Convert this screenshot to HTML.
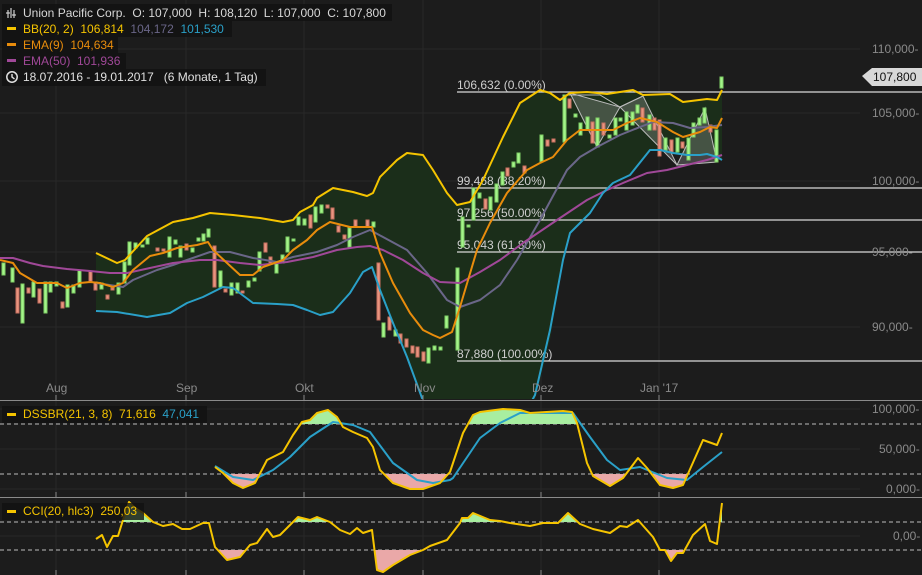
<!DOCTYPE html><html><head><meta charset="utf-8"><style>
html,body{margin:0;padding:0;background:#1c1c1c;width:922px;height:575px;overflow:hidden}
svg{display:block}
text{font-family:"Liberation Sans",sans-serif;font-size:12px;white-space:pre}
</style></head><body>
<svg width="922" height="575" viewBox="0 0 922 575" xmlns="http://www.w3.org/2000/svg" xml:space="preserve">
<defs>
<clipPath id="main"><rect x="0" y="0" width="922" height="399"/></clipPath>
<clipPath id="dAbove"><rect x="0" y="400" width="922" height="24"/></clipPath>
<clipPath id="dBelow"><rect x="0" y="474" width="922" height="23"/></clipPath>
<clipPath id="cAbove"><rect x="0" y="497" width="922" height="25"/></clipPath>
<clipPath id="cBelow"><rect x="0" y="550" width="922" height="25"/></clipPath>
</defs>
<rect width="922" height="575" fill="#1c1c1c"/>
<g stroke="#282828" stroke-width="1">
<line x1="0" y1="49" x2="860" y2="49"/><line x1="0" y1="113" x2="860" y2="113"/><line x1="0" y1="181" x2="860" y2="181"/><line x1="0" y1="252" x2="860" y2="252"/><line x1="0" y1="327" x2="860" y2="327"/>
<line x1="56" y1="0" x2="56" y2="575"/><line x1="186" y1="0" x2="186" y2="575"/><line x1="304" y1="0" x2="304" y2="575"/><line x1="423" y1="0" x2="423" y2="575"/><line x1="541" y1="0" x2="541" y2="575"/><line x1="659" y1="0" x2="659" y2="575"/>
<line x1="0" y1="409" x2="860" y2="409"/><line x1="0" y1="449" x2="860" y2="449"/><line x1="0" y1="489" x2="860" y2="489"/><line x1="0" y1="536" x2="860" y2="536"/>
</g>
<g clip-path="url(#main)">
<polygon fill="#1b2e1a" points="96,253 117,263 125,260 147,236 173,222 193,218 210,213 233,215 260,218 283,222 293,220 300,212 313,205 317,198 333,188 353,192 367,196 373,193 380,177 397,160 407,153 423,155 433,170 447,193 457,205 470,202 483,180 503,137 520,103 540,90 550,93 560,100 570,93 587,92 607,94 633,90 643,95 670,94 683,102 707,99 717,100 722,90 722,160 717,157 707,154 700,155 687,155 673,153 660,150 650,150 630,175 613,183 603,193 590,213 580,223 570,233 563,260 550,340 535,400 528,420 430,420 422,398 407,357 393,323 380,290 372,267 363,272 350,293 333,312 320,315 307,310 293,305 277,304 253,303 233,288 223,287 213,292 203,297 187,303 170,313 147,317 117,312 96,311"/>
<g stroke="#d8d8d8" stroke-width="1.3">
<line x1="457" y1="92" x2="922" y2="92"/><line x1="457" y1="188" x2="922" y2="188"/><line x1="457" y1="220" x2="922" y2="220"/><line x1="457" y1="252" x2="922" y2="252"/><line x1="457" y1="361" x2="922" y2="361"/>
</g>
<g fill="#cfcfcf"><text x="457" y="89">106,632 (0.00%)</text><text x="457" y="185">99,468 (38.20%)</text><text x="457" y="217">97,256 (50.00%)</text><text x="457" y="249">95,043 (61.80%)</text><text x="457" y="358">87,880 (100.00%)</text></g>
<g fill="rgba(220,220,220,0.22)" stroke="#bbbbbb" stroke-width="1">
<polygon points="570,93 597,147 620,107"/><polygon points="620,107 643,96 677,165"/><polygon points="677,165 705,108 717,162"/>
<polyline fill="none" points="563,95 600,95 620,107 643,96"/>
</g>
<g stroke-width="1">
<g fill="#a4f48a" stroke="#7fd066">
<rect x="2" y="263" width="3" height="12"/><rect x="11" y="268" width="3" height="14"/><rect x="21" y="284" width="3" height="39"/><rect x="32" y="282" width="3" height="15"/><rect x="44" y="282" width="3" height="31"/><rect x="49" y="282" width="3" height="10"/><rect x="55" y="282" width="3" height="4"/><rect x="66" y="285" width="3" height="22"/><rect x="72" y="285" width="3" height="8"/><rect x="78" y="270" width="3" height="17"/><rect x="100" y="283" width="3" height="6"/><rect x="117" y="283" width="3" height="11"/><rect x="123" y="262" width="3" height="21"/><rect x="128" y="242" width="3" height="23"/><rect x="134" y="243" width="3" height="5"/><rect x="141" y="245" width="3" height="2"/><rect x="146" y="238" width="3" height="6"/><rect x="168" y="237" width="3" height="20"/><rect x="174" y="240" width="3" height="4"/><rect x="179" y="246" width="3" height="11"/><rect x="191" y="248" width="3" height="4"/><rect x="197" y="238" width="3" height="3"/><rect x="202" y="234" width="3" height="7"/><rect x="207" y="229" width="3" height="8"/><rect x="219" y="271" width="3" height="16"/><rect x="230" y="283" width="3" height="12"/><rect x="236" y="283" width="3" height="10"/><rect x="247" y="281" width="3" height="6"/><rect x="253" y="278" width="3" height="3"/><rect x="258" y="252" width="3" height="19"/><rect x="275" y="263" width="3" height="10"/><rect x="281" y="255" width="3" height="8"/><rect x="286" y="237" width="3" height="15"/><rect x="292" y="239" width="3" height="2"/><rect x="297" y="217" width="3" height="8"/><rect x="303" y="219" width="3" height="6"/><rect x="314" y="207" width="3" height="15"/><rect x="320" y="205" width="3" height="8"/><rect x="348" y="228" width="3" height="19"/><rect x="372" y="222" width="3" height="5"/><rect x="382" y="323" width="3" height="14"/><rect x="394" y="330" width="3" height="6"/><rect x="427" y="348" width="3" height="15"/><rect x="433" y="346" width="3" height="4"/><rect x="439" y="347" width="3" height="3"/><rect x="445" y="316" width="3" height="12"/><rect x="456" y="268" width="3" height="82"/>
<rect x="461" y="217" width="3" height="30"/><rect x="467" y="225" width="3" height="2"/><rect x="472" y="188" width="3" height="32"/><rect x="478" y="193" width="3" height="5"/><rect x="489" y="197" width="3" height="13"/><rect x="495" y="184" width="3" height="18"/><rect x="501" y="172" width="3" height="13"/><rect x="512" y="162" width="3" height="5"/><rect x="517" y="153" width="3" height="10"/><rect x="540" y="135" width="3" height="27"/><rect x="563" y="95" width="3" height="47"/><rect x="574" y="114" width="3" height="3"/><rect x="579" y="123" width="3" height="12"/><rect x="586" y="117" width="3" height="13"/><rect x="596" y="118" width="3" height="29"/><rect x="608" y="135" width="3" height="3"/><rect x="614" y="118" width="3" height="17"/><rect x="619" y="118" width="3" height="3"/><rect x="625" y="112" width="3" height="18"/><rect x="631" y="112" width="3" height="13"/><rect x="636" y="105" width="3" height="8"/><rect x="648" y="115" width="3" height="15"/><rect x="664" y="138" width="3" height="12"/><rect x="676" y="138" width="3" height="14"/><rect x="687" y="138" width="3" height="22"/><rect x="692" y="123" width="3" height="14"/><rect x="698" y="118" width="3" height="7"/><rect x="703" y="108" width="3" height="15"/><rect x="715" y="130" width="3" height="32"/><rect x="720" y="77" width="3" height="11"/>
</g>
<g fill="#e8957f" stroke="#c87060">
<rect x="16" y="288" width="3" height="25"/><rect x="27" y="288" width="3" height="5"/><rect x="38" y="289" width="3" height="14"/><rect x="61" y="302" width="3" height="6"/><rect x="89" y="271" width="3" height="11"/><rect x="94" y="282" width="3" height="8"/><rect x="106" y="295" width="3" height="4"/><rect x="111" y="288" width="3" height="2"/><rect x="156" y="248" width="3" height="3"/><rect x="162" y="249" width="3" height="2"/><rect x="185" y="244" width="3" height="6"/><rect x="213" y="246" width="3" height="41"/><rect x="224" y="289" width="3" height="3"/><rect x="241" y="291" width="3" height="2"/><rect x="264" y="243" width="3" height="9"/><rect x="269" y="257" width="3" height="6"/><rect x="309" y="215" width="3" height="13"/><rect x="326" y="205" width="3" height="3"/><rect x="331" y="208" width="3" height="11"/><rect x="337" y="226" width="3" height="6"/><rect x="343" y="235" width="3" height="4"/><rect x="354" y="220" width="3" height="7"/><rect x="366" y="220" width="3" height="7"/><rect x="377" y="263" width="3" height="57"/><rect x="388" y="317" width="3" height="13"/><rect x="399" y="334" width="3" height="9"/><rect x="405" y="339" width="3" height="8"/><rect x="411" y="346" width="3" height="7"/><rect x="416" y="347" width="3" height="10"/><rect x="422" y="352" width="3" height="9"/>
<rect x="484" y="199" width="3" height="10"/><rect x="506" y="168" width="3" height="8"/><rect x="523" y="166" width="3" height="7"/><rect x="546" y="140" width="3" height="6"/><rect x="552" y="139" width="3" height="3"/><rect x="568" y="99" width="3" height="9"/><rect x="591" y="122" width="3" height="21"/><rect x="602" y="123" width="3" height="12"/><rect x="641" y="108" width="3" height="14"/><rect x="653" y="118" width="3" height="12"/><rect x="658" y="120" width="3" height="36"/><rect x="670" y="140" width="3" height="12"/><rect x="681" y="142" width="3" height="6"/><rect x="709" y="125" width="3" height="7"/>
</g>
</g>
<g fill="none" stroke-width="2" stroke-linejoin="round">
<polyline stroke="#6a6688" points="96,283 123,287 133,280 157,270 173,265 187,260 210,252 230,252 253,258 277,262 293,257 317,252 337,245 353,237 370,230 383,237 407,250 427,273 447,300 460,307 480,300 500,285 517,260 540,220 567,170 580,157 597,147 620,135 640,127 653,122 673,123 690,128 707,127 722,125"/>
<polyline stroke="#a04898" points="0,258 13,258 30,263 43,266 67,269 90,271 110,273 127,273 150,268 173,263 200,260 217,260 240,263 260,265 287,262 313,257 337,250 357,247 370,246 383,250 403,260 423,273 440,282 460,283 480,272 500,260 523,243 557,220 587,200 607,190 623,183 647,173 667,170 687,165 707,160 722,155"/>
<polyline stroke="#e88c0c" points="0,260 13,263 20,273 37,283 57,283 67,288 80,283 90,282 100,283 113,287 123,283 133,270 150,256 163,253 177,248 197,245 208,242 213,250 227,263 240,275 253,275 263,267 283,260 293,250 307,240 317,230 330,222 350,227 372,227 380,253 393,283 410,313 423,330 433,335 440,338 452,332 460,307 477,250 490,223 507,193 527,170 540,163 553,157 567,140 580,130 597,130 613,130 627,123 640,118 657,122 673,132 683,137 700,132 710,127 717,128 722,118"/>
<polyline stroke="#2aa0c8" points="96,311 117,312 147,317 170,313 187,303 203,297 213,292 223,287 233,288 253,303 277,304 293,305 307,310 320,315 333,312 350,293 363,272 372,267 380,290 393,323 407,357 422,398 430,420"/>
<polyline stroke="#2aa0c8" points="527,410 535,395 550,330 563,260 570,233 580,223 590,213 603,193 613,183 630,175 650,150 660,150 673,153 687,155 700,155 707,154 717,157 722,160"/>
<polyline stroke="#f5c400" points="96,253 117,263 125,260 147,236 173,222 193,218 210,213 233,215 260,218 283,222 293,220 300,212 313,205 317,198 333,188 353,192 367,196 373,193 380,177 397,160 407,153 423,155 433,170 447,193 457,205 470,202 483,180 503,137 520,103 540,90 550,93 560,100 570,93 587,92 607,94 633,90 643,95 670,94 683,102 707,99 717,100 722,90"/>
</g>
</g>
<polygon points="862,76 872,68 922,68 922,86 872,86" fill="#d8d8d8"/>
<text x="873" y="81" fill="#111" font-size="12">107,800</text>
<g fill="#8a8a8a"><text x="872" y="53">110,000-</text><text x="872" y="117">105,000-</text><text x="872" y="185">100,000-</text><text x="872" y="256">95,000-</text><text x="872" y="331">90,000-</text>
<text x="872" y="413">100,000-</text><text x="879" y="453">50,000-</text><text x="886" y="493">0,000-</text><text x="893" y="540">0,00-</text>
<text x="46" y="392">Aug</text><text x="176" y="392">Sep</text><text x="295" y="392">Okt</text><text x="414" y="392">Nov</text><text x="532" y="392">Dez</text><text x="640" y="392">Jan '17</text></g>
<line x1="0" y1="400.5" x2="922" y2="400.5" stroke="#8a8a8a"/>
<line x1="0" y1="497.5" x2="922" y2="497.5" stroke="#8a8a8a"/>
<g stroke="#8a8a8a"><line x1="56" y1="395" x2="56" y2="400"/><line x1="186" y1="395" x2="186" y2="400"/><line x1="304" y1="395" x2="304" y2="400"/><line x1="423" y1="395" x2="423" y2="400"/><line x1="541" y1="395" x2="541" y2="400"/><line x1="659" y1="395" x2="659" y2="400"/>
<line x1="56" y1="492" x2="56" y2="497"/><line x1="186" y1="492" x2="186" y2="497"/><line x1="304" y1="492" x2="304" y2="497"/><line x1="423" y1="492" x2="423" y2="497"/><line x1="541" y1="492" x2="541" y2="497"/><line x1="659" y1="492" x2="659" y2="497"/>
<line x1="56" y1="570" x2="56" y2="575"/><line x1="186" y1="570" x2="186" y2="575"/><line x1="304" y1="570" x2="304" y2="575"/><line x1="423" y1="570" x2="423" y2="575"/><line x1="541" y1="570" x2="541" y2="575"/><line x1="659" y1="570" x2="659" y2="575"/></g>
<g stroke="#bdbdbd" stroke-dasharray="4,3"><line x1="0" y1="424" x2="922" y2="424"/><line x1="0" y1="474" x2="922" y2="474"/><line x1="0" y1="522" x2="922" y2="522"/><line x1="0" y1="550" x2="922" y2="550"/></g>
<polygon clip-path="url(#dAbove)" fill="#a8eea0" points="215,467 223,473 233,483 243,488 255,483 267,460 273,457 283,452 293,435 302,422 310,420 317,413 328,410 337,417 343,427 353,432 367,438 373,447 380,470 393,483 410,489 423,489 440,483 450,472 463,433 473,415 480,412 503,409 520,410 530,413 563,411 572,412 577,423 587,463 593,476 610,486 623,478 638,458 647,468 660,485 673,488 683,485 703,440 717,445 722,433 722,424 215,424"/>
<polygon clip-path="url(#dBelow)" fill="#eaa8a8" points="215,467 223,473 233,483 243,488 255,483 267,460 273,457 283,452 293,435 302,422 310,420 317,413 328,410 337,417 343,427 353,432 367,438 373,447 380,470 393,483 410,489 423,489 440,483 450,472 463,433 473,415 480,412 503,409 520,410 530,413 563,411 572,412 577,423 587,463 593,476 610,486 623,478 638,458 647,468 660,485 673,488 683,485 703,440 717,445 722,433 722,474 215,474"/>
<g fill="none" stroke-width="2" stroke-linejoin="round">
<polyline stroke="#2aa0c8" points="215,466 233,477 253,480 273,470 290,457 310,437 333,422 353,425 370,432 393,463 417,480 433,483 450,480 453,478 480,438 500,423 520,413 540,413 573,413 590,437 607,460 620,470 640,467 667,478 687,480 703,467 722,452"/>
<polyline stroke="#f5c400" points="215,467 223,473 233,483 243,488 255,483 267,460 273,457 283,452 293,435 302,422 310,420 317,413 328,410 337,417 343,427 353,432 367,438 373,447 380,470 393,483 410,489 423,489 440,483 450,472 463,433 473,415 480,412 503,409 520,410 530,413 563,411 572,412 577,423 587,463 593,476 610,486 623,478 638,458 647,468 660,485 673,488 683,485 703,440 717,445 722,433"/>
</g>
<polygon clip-path="url(#cAbove)" fill="#a8eea0" points="96,539 102,535 107,547 113,536 118,536 123,520 129,502 135,508 143,513 153,522 163,526 173,524 182,529 190,529 203,523 209,523 215,547 227,560 240,557 250,545 257,543 267,529 273,537 280,535 290,525 298,517 310,520 317,517 330,522 340,530 350,534 357,528 363,533 372,530 377,570 383,572 393,565 410,555 423,550 430,546 447,540 460,523 462,518 468,518 473,513 490,520 500,521 510,523 530,526 543,523 558,523 568,513 580,524 593,529 610,533 620,526 627,527 638,520 653,537 660,550 665,550 671,561 677,553 683,553 693,535 705,524 710,541 717,544 722,503 722,522 96,522"/>
<polygon clip-path="url(#cBelow)" fill="#eaa8a8" points="96,539 102,535 107,547 113,536 118,536 123,520 129,502 135,508 143,513 153,522 163,526 173,524 182,529 190,529 203,523 209,523 215,547 227,560 240,557 250,545 257,543 267,529 273,537 280,535 290,525 298,517 310,520 317,517 330,522 340,530 350,534 357,528 363,533 372,530 377,570 383,572 393,565 410,555 423,550 430,546 447,540 460,523 462,518 468,518 473,513 490,520 500,521 510,523 530,526 543,523 558,523 568,513 580,524 593,529 610,533 620,526 627,527 638,520 653,537 660,550 665,550 671,561 677,553 683,553 693,535 705,524 710,541 717,544 722,503 722,550 96,550"/>
<polyline fill="none" stroke="#f5c400" stroke-width="2" stroke-linejoin="round" points="96,539 102,535 107,547 113,536 118,536 123,520 129,502 135,508 143,513 153,522 163,526 173,524 182,529 190,529 203,523 209,523 215,547 227,560 240,557 250,545 257,543 267,529 273,537 280,535 290,525 298,517 310,520 317,517 330,522 340,530 350,534 357,528 363,533 372,530 377,570 383,572 393,565 410,555 423,550 430,546 447,540 460,523 462,518 468,518 473,513 490,520 500,521 510,523 530,526 543,523 558,523 568,513 580,524 593,529 610,533 620,526 627,527 638,520 653,537 660,550 665,550 671,561 677,553 683,553 693,535 705,524 710,541 717,544 722,503"/>
<g fill="rgba(18,18,18,0.8)">
<rect x="2" y="4" width="390" height="17"/><rect x="2" y="21" width="230" height="16"/><rect x="2" y="37" width="116" height="16"/><rect x="2" y="53" width="124" height="16"/><rect x="2" y="69" width="264" height="17"/>
<rect x="2" y="406" width="205" height="17"/><rect x="2" y="503" width="142" height="17"/>
</g>
<g stroke="#cfcfcf" stroke-width="1.2" fill="none"><line x1="8" y1="10" x2="8" y2="18"/><line x1="11" y1="8" x2="11" y2="18"/><line x1="14" y1="10" x2="14" y2="18"/><line x1="6" y1="13" x2="10" y2="13"/><line x1="12" y1="15" x2="16" y2="15"/></g>
<circle cx="12" cy="77" r="5.2" fill="none" stroke="#e0e0e0" stroke-width="1.5"/><polyline points="12,74 12,77 14.5,79" fill="none" stroke="#e0e0e0" stroke-width="1.4"/>
<rect x="7" y="27" width="9" height="3" fill="#f5c400"/><rect x="7" y="43" width="9" height="3" fill="#e88c0c"/><rect x="7" y="59" width="9" height="3" fill="#a04898"/>
<rect x="7" y="413" width="9" height="3" fill="#f5c400"/><rect x="7" y="510" width="9" height="3" fill="#f5c400"/>
<text x="23" y="17" fill="#d8d8d8">Union Pacific Corp.  O: 107,000  H: 108,120  L: 107,000  C: 107,800</text>
<text x="23" y="33" fill="#f5c400">BB(20, 2)  106,814  <tspan fill="#6a6688">104,172</tspan>  <tspan fill="#2aa0c8">101,530</tspan></text>
<text x="23" y="49" fill="#e88c0c">EMA(9)  104,634</text>
<text x="23" y="65" fill="#a04898">EMA(50)  101,936</text>
<text x="23" y="81" fill="#e0e0e0">18.07.2016 - 19.01.2017   (6 Monate, 1 Tag)</text>
<text x="23" y="418" fill="#f5c400">DSSBR(21, 3, 8)  71,616  <tspan fill="#2aa0c8">47,041</tspan></text>
<text x="23" y="515" fill="#f5c400">CCI(20, hlc3)  250,03</text>
</svg>
</body></html>
